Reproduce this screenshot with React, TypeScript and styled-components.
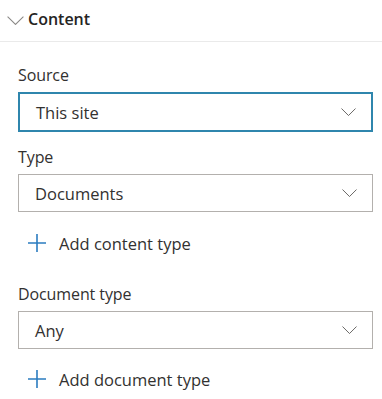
import React from 'react';
import styled, { createGlobalStyle } from 'styled-components';

const GlobalStyle = createGlobalStyle`
  html, body {
    margin: 0;
    padding: 0;
    background: #fff;
  }
  body {
    font-family: "Open Sans", "Noto Sans", sans-serif;
    color: #323130;
  }
`;

const Panel = styled.div`
  width: 382px;
  height: 399px;
  overflow: hidden;
  background: #fff;
`;

const SectionHeader = styled.button`
  display: flex;
  align-items: center;
  gap: 4px;
  width: 100%;
  height: 42px;
  padding: 0 0 0 7px;
  margin: 0;
  border: 0;
  border-bottom: 1px solid #eaeaea;
  background: transparent;
  box-sizing: border-box;
  font-family: inherit;
  cursor: pointer;
`;

const HeaderTitle = styled.span`
  font-size: 16px;
  font-weight: 600;
  color: #252423;
  line-height: 20px;
  padding-bottom: 4px;
`;

const Body = styled.div`
  display: flex;
  flex-direction: column;
  padding: 23px 9px 0 18px;
`;

const Field = styled.div<{ $gap?: number }>`
  display: flex;
  flex-direction: column;
  margin-top: ${p => p.$gap ?? 0}px;
`;

const Label = styled.label`
  font-size: 16px;
  line-height: 20px;
  letter-spacing: -0.1px;
  color: #323130;
  margin-bottom: 7px;
`;

const Select = styled.div<{ $focused?: boolean }>`
  display: flex;
  align-items: center;
  justify-content: space-between;
  box-sizing: border-box;
  height: ${p => (p.$focused ? 40 : 38)}px;
  padding: 0 15px 0 ${p => (p.$focused ? 16 : 16)}px;
  border: ${p => (p.$focused ? '2px solid #2f86ad' : '1px solid #b3b0ad')};
  background: #fff;
  font-size: 16.5px;
  color: #323130;
`;

const AddButton = styled.button<{ $gap?: number }>`
  display: flex;
  align-items: center;
  gap: 13px;
  height: 32px;
  margin: ${p => p.$gap ?? 0}px 0 0 0;
  padding: 0 0 0 10px;
  border: 0;
  background: transparent;
  font-family: inherit;
  font-size: 16.5px;
  color: #323130;
  cursor: pointer;
`;

const Chevron = ({ size = 16, color = '#605e5c' }: { size?: number; color?: string }) => (
  <svg width={size} height={size / 2 + 1} viewBox="0 0 16 9" fill="none">
    <path d="M0.5 0.5 L8 8 L15.5 0.5" stroke={color} strokeWidth="1" />
  </svg>
);

const Plus = () => (
  <svg width="18" height="18" viewBox="0 0 18 18" fill="none">
    <path d="M9 0 V18 M0 9 H18" stroke="#2b7cc0" strokeWidth="1.6" />
  </svg>
);

const Dropdown = ({ value, focused }: { value: string; focused?: boolean }) => (
  <Select $focused={focused}>
    <span>{value}</span>
    <Chevron size={15} />
  </Select>
);

export default function App() {
  return (
    <Panel>
      <GlobalStyle />
      <SectionHeader>
        <Chevron size={17} color="#8a8886" />
        <HeaderTitle>Content</HeaderTitle>
      </SectionHeader>
      <Body>
        <Field>
          <Label>Source</Label>
          <Dropdown value="This site" focused />
        </Field>
        <Field $gap={15}>
          <Label>Type</Label>
          <Dropdown value="Documents" />
        </Field>
        <AddButton $gap={15}>
          <Plus />
          <span>Add content type</span>
        </AddButton>
        <Field $gap={25}>
          <Label>Document type</Label>
          <Dropdown value="Any" />
        </Field>
        <AddButton $gap={14}>
          <Plus />
          <span>Add document type</span>
        </AddButton>
      </Body>
    </Panel>
  );
}
